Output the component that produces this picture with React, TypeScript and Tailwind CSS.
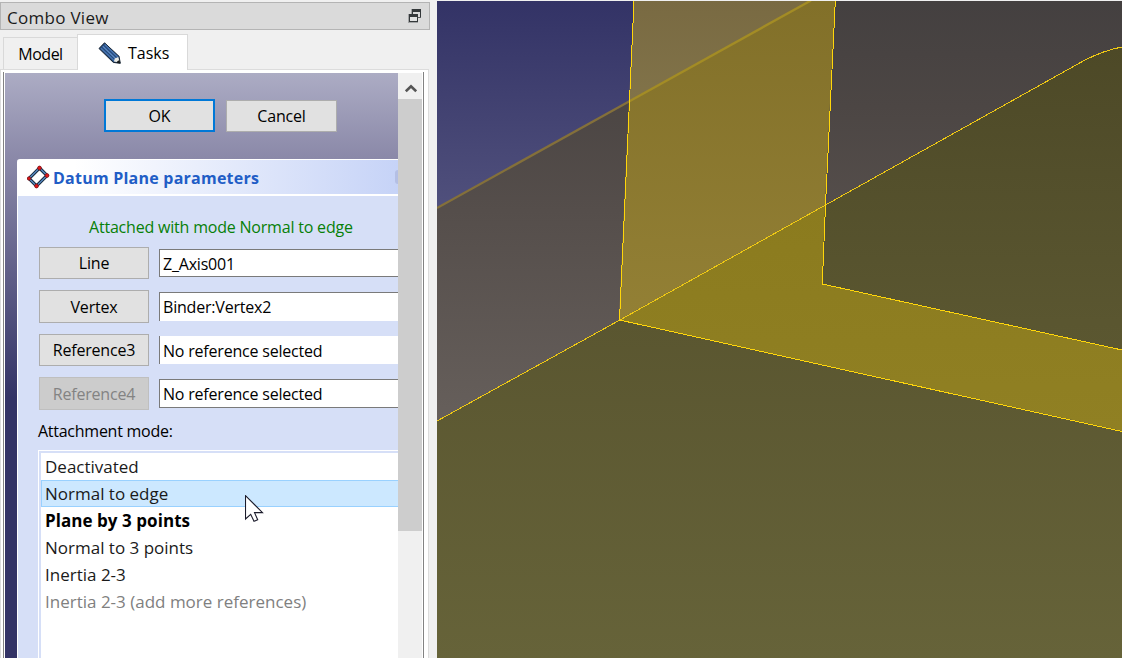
import React from "react";

function RestoreIcon() {
  return (
    <svg width="14" height="14" viewBox="0 0 14 14" shapeRendering="crispEdges" className="block">
      <path d="M4 0h9v9H4z" fill="#34383a" />
      <path d="M5 3h7v5H5z" fill="#dadada" />
      <path d="M1 5h9v9H1z" fill="#34383a" />
      <path d="M0 5h1v9H0zM3 0h1v5H3zM1 13h9v1H1z" fill="#a2a4a5" />
      <path d="M2 8h7v4H2z" fill="#e0e1e1" />
      <path d="M10 8h3v1h-3z" fill="#5a5d5f" />
    </svg>
  );
}

function PencilIcon() {
  return (
    <svg width="24" height="24" viewBox="0 0 24 24" className="block">
      <path d="M1 7.5 6.5 1.8 21 15.3l1.3 7-7-.9z" fill="#24497c" stroke="#14202e" strokeWidth="1" strokeLinejoin="round" />
      <path d="M3 7.2 16.2 19.6M6.7 3.5 20 16.2" stroke="#4a77b3" strokeWidth="1.3" />
      <path d="M4.8 5.3 18 18" stroke="#5c89c4" strokeWidth="1.3" />
      <path d="m15.8 20.6 1-3.2 3.5-1.5 1.5 5.6z" fill="#e9e9e3" />
      <path d="m19.3 20.2 2.2-1.2.8 3.3-3.6-.4z" fill="#15191c" />
    </svg>
  );
}

function DatumIcon() {
  return (
    <svg width="24" height="24" viewBox="0 0 24 24" className="block">
      <path d="M12.5 3 20 10.5 9.5 21 2 13.500z" fill="#fff" stroke="#152638" strokeWidth="3.200" />
      <path d="M12.500 3 20 10.500 9.500 21 2 13.500z" fill="none" stroke="#5587bd" strokeWidth="1.5" />
      <g fill="#e01818" stroke="#7c0b12" strokeWidth=".7">
        <circle cx="12.500" cy="3" r="1.900" />
        <circle cx="20" cy="10.500" r="1.900" />
        <circle cx="9.500" cy="21" r="1.900" />
        <circle cx="2" cy="13.500" r="1.700" />
      </g>
    </svg>
  );
}

function Viewport() {
  return (
    <svg width="685" height="657" viewBox="437 1 685 657" className="mt-px block shrink-0" preserveAspectRatio="none">
      <defs>
        <linearGradient id="sky" gradientUnits="userSpaceOnUse" x1="0" y1="1" x2="0" y2="208">
          <stop offset="0" stopColor="#333366" />
          <stop offset="1" stopColor="#50507c" />
        </linearGradient>
        <linearGradient id="wall" gradientUnits="userSpaceOnUse" x1="0" y1="1" x2="0" y2="421">
          <stop offset="0" stopColor="#444040" />
          <stop offset=".25" stopColor="#4c4644" />
          <stop offset=".5" stopColor="#554e4b" />
          <stop offset="1" stopColor="#665f5b" />
        </linearGradient>
        <linearGradient id="floor" gradientUnits="userSpaceOnUse" x1="0" y1="47" x2="0" y2="658">
          <stop offset="0" stopColor="#4d4927" />
          <stop offset=".45" stopColor="#5a5630" />
          <stop offset="1" stopColor="#666339" />
        </linearGradient>
        <linearGradient id="planeTop" gradientUnits="userSpaceOnUse" x1="0" y1="1" x2="0" y2="101">
          <stop offset="0" stopColor="#796a42" />
          <stop offset="1" stopColor="#817349" />
        </linearGradient>
        <linearGradient id="planeMid" gradientUnits="userSpaceOnUse" x1="0" y1="1" x2="0" y2="320">
          <stop offset="0" stopColor="#827029" />
          <stop offset="1" stopColor="#938035" />
        </linearGradient>
        <linearGradient id="planeLow" gradientUnits="userSpaceOnUse" x1="0" y1="205" x2="0" y2="431">
          <stop offset="0" stopColor="#8b7b1e" />
          <stop offset="1" stopColor="#908023" />
        </linearGradient>
      </defs>
      <path d="M437 1h685v657H437z" fill="url(#wall)" />
      <path d="M437 1H811L437 208z" fill="url(#sky)" />
      <path d="M437 421 619 320 1085 60Q1105 50 1122 47V658H437z" fill="url(#floor)" />
      <path d="M634 1H811L629 101z" fill="url(#planeTop)" />
      <path d="M811 1H835L825 205 619 320 629 101z" fill="url(#planeMid)" />
      <path d="M619 320 825 205 822 284 1122 350V431z" fill="url(#planeLow)" />
      <path d="M437 208 629 101.500" stroke="#84703a" strokeWidth="2.200" fill="none" />
      <path d="M629 101.500 811 .5" stroke="#a38c25" strokeWidth="2.400" fill="none" />
      <g fill="none" stroke="#ffd60a" strokeWidth="1" shapeRendering="crispEdges">
        <path d="M437 421 619 320.500 825.500 205 1085 60Q1105 50 1122 47" stroke="#eec813" />
        <path d="M634 1 629.500 101 619.500 320 1122 431.500" />
        <path d="M835.300 1 825.500 205 822.300 284 1122 350" />
      </g>
    </svg>
  );
}

type RefRow = { button: string; value: string; rowClass: string; buttonClass: string; inputClass: string };

const refs: RefRow[] = [
  {
    button: "Line",
    value: "Z_Axis001",
    rowClass: "h-[32px] mb-[11px]",
    buttonClass: "h-[32px] border-[#adadad] bg-[#e1e1e1] text-black",
    inputClass: "mt-[2px] h-[28px] border-y pt-px",
  },
  {
    button: "Vertex",
    value: "Binder:Vertex2",
    rowClass: "h-[33px] mb-[11px]",
    buttonClass: "h-[33px] border-[#adadad] bg-[#e1e1e1] text-black",
    inputClass: "mt-[2px] h-[29px] border-t",
  },
  {
    button: "Reference3",
    value: "No reference selected",
    rowClass: "h-[32px] mb-[11px]",
    buttonClass: "h-[32px] border-[#adadad] bg-[#e1e1e1] text-black",
    inputClass: "mt-[2px] h-[28px] pt-[2px]",
  },
  {
    button: "Reference4",
    value: "No reference selected",
    rowClass: "h-[33px]",
    buttonClass: "h-[33px] border-[#bfbfbf] bg-[#cccccc] text-[#838383]",
    inputClass: "mt-[2px] h-[29px] border-y pt-px",
  },
];

const modes = [
  { name: "Deactivated", style: "pl-[4px] text-[#1a1a1a]" },
  { name: "Normal to edge", style: "border border-r-0 border-[#99d1ff] bg-[#cce8ff] pl-[3px] text-[#1a1a1a]" },
  { name: "Plane by 3 points", style: "pl-[4px] font-bold text-black tracking-[0.05px]" },
  { name: "Normal to 3 points", style: "pl-[4px] text-[#1a1a1a]" },
  { name: "Inertia 2-3", style: "pl-[4px] text-[#1a1a1a]" },
  { name: "Inertia 2-3 (add more references)", style: "pl-[4px] text-[#808080]" },
];

export default function App() {
  return (
    <div className="relative flex h-[658px] w-[1122px] overflow-hidden bg-[#f0f0f0] font-['Open_Sans',sans-serif] text-[16px] leading-none whitespace-nowrap text-black">
      <div className="flex w-[437px] shrink-0 flex-col pt-[2px]">
        <div className="flex h-[28px] w-[430px] shrink-0 items-center justify-between border border-[#b4b4b4] bg-[#dadada] pr-[7px] pl-[6px] text-[17px]">
          <span className="pt-[3px] tracking-[0.28px] text-[#1a1a1a]">Combo View</span>
          <RestoreIcon />
        </div>

        <div className="flex h-[39px] shrink-0 items-end pt-[4px] pl-[3px]">
          <div className="flex h-[32px] w-[74px] items-center justify-center border border-r-0 border-b-0 border-[#d9d9d9] bg-[#f0f0f0] tracking-[-0.5px]">
            Model
          </div>
          <div className="relative z-10 -mb-px flex h-[36px] w-[111px] items-center border border-b-0 border-[#d9d9d9] bg-white pl-[20px]">
            <PencilIcon />
            <span className="ml-[6px]">Tasks</span>
          </div>
        </div>

        <div className="flex w-[429px] flex-1 border border-b-0 border-[#dcdcdc] bg-white pt-[2px] pr-[4px] pl-[2px]">
          <div className="flex w-[421px] border-x border-[#828282] bg-white pt-px pr-px pl-px">
            <div className="flex w-[393px] flex-col bg-[linear-gradient(#acacc4_0px,#8a88a8_86px,#333366_325px)] pt-[26px] tracking-[-0.2px]">
              <div className="flex h-[33px] gap-[11px] pl-[99px]">
                <div className="flex h-[33px] w-[111px] items-center justify-center border-2 border-[#0078d7] bg-[#e1e1e1]">OK</div>
                <div className="mt-px flex h-[32px] w-[111px] items-center justify-center border border-[#adadad] bg-[#e1e1e1]">Cancel</div>
              </div>

              <div className="mt-[27px] ml-[12px] flex h-[37px] shrink-0 items-center rounded-tl-[3px] border-t border-b-2 border-white bg-[linear-gradient(90deg,#ffffff_15%,#c6d3f7)] pl-[10px]">
                <DatumIcon />
                <span className="ml-[2px] flex-1 pt-[2px] text-[16px] font-bold tracking-[0.23px] text-[#215dc6]">Datum Plane parameters</span>
                <span className="block h-[14px] w-[3px] rounded-l-full bg-[#b4bfe4]" />
              </div>

              <div className="ml-[12px] flex flex-1 flex-col border-l border-white bg-[#d6dff7] pl-[21px]">
                <div className="flex h-[51px] items-center pt-[10px] pl-[50px] text-[#078007]">Attached with mode Normal to edge</div>
                {refs.map((r) => (
                  <div key={r.button} className={`flex shrink-0 gap-[10px] ${r.rowClass}`}>
                    <div className={`flex w-[110px] items-center justify-center border ${r.buttonClass}`}>{r.button}</div>
                    <div className={`flex flex-1 items-center border-l border-[#7a7a7a] bg-white pl-[3px] ${r.inputClass}`}>{r.value}</div>
                  </div>
                ))}
                <div className="-ml-px flex h-[40px] items-center pt-[2px] tracking-[-0.26px]">Attachment mode:</div>
                <div className="-ml-px flex flex-1 border-t border-l border-white pt-[2px] pl-[2px]">
                  <div className="flex-1 bg-white text-[17px] tracking-normal">
                    {modes.map((m) => (
                      <div key={m.name} className={`flex h-[27px] items-center ${m.style}`}>
                        {m.name}
                      </div>
                    ))}
                  </div>
                </div>
              </div>
            </div>
            <div className="flex w-[24px] flex-col bg-[#f0f0f0]">
              <div className="flex h-[26px] items-center justify-center pt-[3px] pl-px">
                <svg width="12" height="10" viewBox="0 0 12 10" className="block">
                  <path d="M.8 8.300 6 3.200l5.200 5.100" fill="none" stroke="#555" strokeWidth="2.600" />
                </svg>
              </div>
              <div className="h-[432px] bg-[#cdcdcd]" />
            </div>
          </div>
        </div>
      </div>
      <Viewport />
      <svg width="20" height="29" viewBox="0 0 20 29" className="absolute top-[495px] left-[245px]">
        <path d="M.5.7V24l5.200-4.700 3.300 7 3.700-1.500-3.200-7.200H17.500z" fill="#fff" stroke="#1b1b2b" strokeWidth="1.100" />
      </svg>
    </div>
  );
}
